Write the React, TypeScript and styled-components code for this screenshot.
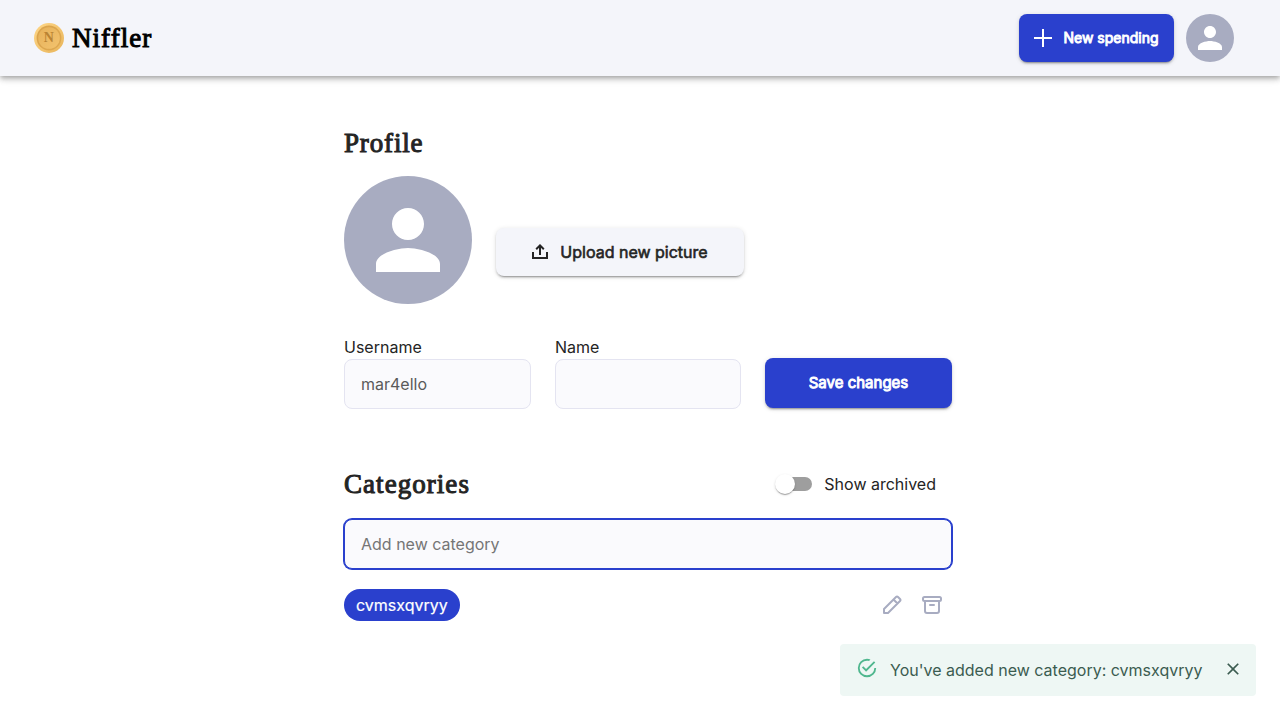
import React from "react";
import styled, { createGlobalStyle } from "styled-components";

const GlobalStyle = createGlobalStyle`
  *, *::before, *::after { box-sizing: border-box; }
  body { margin: 0; background: #fff; color: #242424; font: 400 16px/24px Inter, sans-serif; height: 720px; overflow: hidden; }
  button, input { font: inherit; margin: 0; }
  button { cursor: pointer; }
`;

const Header = styled.header`
  height: 76px;
  padding: 0 46px 0 34px;
  display: flex;
  align-items: center;
  background: #f4f5fa;
  box-shadow: 0 2px 4px -1px rgba(0, 0, 0, 0.2), 0 4px 5px rgba(0, 0, 0, 0.14), 0 1px 10px rgba(0, 0, 0, 0.12);
`;
const Brand = styled.a`
  display: flex;
  align-items: center;
  gap: 8px;
  margin-right: auto;
  color: #000;
`;
const Title = styled.h2<{ $spacing: string }>`
  margin: 0;
  font: 400 27px/32px "Liberation Serif", serif;
  -webkit-text-stroke: 1px currentColor;
  letter-spacing: ${(p) => p.$spacing};
  white-space: nowrap;
`;
const Button = styled.button<{ $tone?: "light"; $width: number; $height?: number; $size?: number; $gap?: number }>`
  width: ${(p) => p.$width}px;
  height: ${(p) => p.$height ?? 48}px;
  padding: 0;
  display: flex;
  align-items: center;
  justify-content: center;
  gap: ${(p) => p.$gap ?? 8}px;
  border: 0;
  border-radius: 8px;
  color: ${(p) => (p.$tone ? "#242424" : "#fff")};
  background: ${(p) => (p.$tone ? "#f4f5fa" : "#2a40cd")};
  font-size: ${(p) => p.$size ?? 16}px;
  font-weight: 400;
  -webkit-text-stroke: ${(p) => (p.$tone ? 0.6 : 0.9)}px currentColor;
  white-space: nowrap;
  box-shadow: 0 3px 1px -2px rgba(0, 0, 0, 0.2), 0 2px 2px rgba(0, 0, 0, 0.14), 0 1px 5px rgba(0, 0, 0, 0.12);
`;
const Avatar = styled.div<{ $size: number }>`
  width: ${(p) => p.$size}px;
  height: ${(p) => p.$size}px;
  display: grid;
  place-items: center;
  flex: none;
  border-radius: 50%;
  background: #a8acc1;
  color: #fff;
  svg { width: 75%; height: 75%; fill: currentColor; }
`;
const HeaderActions = styled.div`
  display: flex;
  gap: 12px;
`;
const Main = styled.main`
  width: 608px;
  margin: 0 0 0 344px;
  padding-top: 51px;
`;
const PictureRow = styled.div`
  display: flex;
  align-items: center;
  gap: 24px;
  margin-top: 17px;
  ${Button} { margin-top: 24px; }
`;
const Form = styled.form`
  display: grid;
  grid-template-columns: 187px 186px 187px;
  column-gap: 24px;
  align-items: end;
  margin-top: 31px;
  ${Button} { margin-bottom: 1px; }
`;
const Field = styled.label`
  display: flex;
  flex-direction: column;
`;
const Input = styled.input<{ $active?: boolean }>`
  width: 100%;
  height: 50px;
  padding: 0 16px;
  border: 1px solid ${(p) => (p.$active ? "#2a40cd" : "#e4e4f1")};
  border-radius: 8px;
  outline: 0;
  box-shadow: ${(p) => (p.$active ? "0 0 0 1px #2a40cd" : "none")};
  background: #fafafd;
  color: #5a5a5a;
  &::placeholder { color: #757575; opacity: 1; }
`;
const CategoriesHead = styled.div`
  display: flex;
  justify-content: space-between;
  align-items: center;
  margin: 59px 16px 19px 0;
`;
const ToggleLabel = styled.label`
  display: flex;
  align-items: center;
  gap: 12px;
`;
const Track = styled.span`
  width: 34px;
  height: 14px;
  border-radius: 7px;
  display: flex;
  align-items: center;
  background: #9e9e9e;
`;
const Thumb = styled.span`
  width: 20px;
  height: 20px;
  margin-left: -3px;
  border-radius: 50%;
  flex: none;
  background: #fff;
  box-shadow: 0 2px 1px -1px rgba(0, 0, 0, 0.2), 0 1px 1px rgba(0, 0, 0, 0.14), 0 1px 3px rgba(0, 0, 0, 0.12);
`;
const CategoryRow = styled.div`
  display: flex;
  align-items: center;
  justify-content: space-between;
  margin-top: 20px;
  padding-right: 8px;
`;
const Chip = styled.span`
  height: 32px;
  padding: 0 12px;
  border-radius: 16px;
  background: #2a40cd;
  color: #fff;
  -webkit-text-stroke: 0.2px currentColor;
  line-height: 32px;
`;
const RowIcons = styled.div`
  display: flex;
  gap: 16px;
  color: #a8acc1;
`;
const Toast = styled.div`
  position: fixed;
  right: 24px;
  bottom: 24px;
  width: 416px;
  height: 52px;
  padding: 0 13px 0 16px;
  display: flex;
  align-items: center;
  border-radius: 4px;
  background: #eef7f4;
  color: #3b5c50;
`;
const ToastIcon = styled.svg`
  width: 22px;
  height: 22px;
  margin: 0 12px 4px 0;
  fill: #4fb78e;
`;
const CloseIcon = styled.svg`
  width: 20px;
  height: 20px;
  margin: 0 0 2px auto;
  fill: currentColor;
`;

const Person = () => (
  <svg viewBox="0 0 24 24">
    <path d="M12 12c2.21 0 4-1.79 4-4s-1.79-4-4-4-4 1.79-4 4 1.79 4 4 4zm0 2c-2.67 0-8 1.34-8 4v2h16v-2c0-2.66-5.33-4-8-4z" />
  </svg>
);

const Coin = () => (
  <svg width="30" height="30" viewBox="0 0 30 30">
    <defs>
      <linearGradient id="rim" x1="0" y1="0" x2="1" y2="1">
        <stop offset="0" stopColor="#ffd788" />
        <stop offset="1" stopColor="#e8b45a" />
      </linearGradient>
      <linearGradient id="face" x1="0" y1="0" x2="1" y2="1">
        <stop offset="0" stopColor="#d9a24b" />
        <stop offset="1" stopColor="#dfa951" />
      </linearGradient>
      <linearGradient id="center" x1="0" y1="0" x2="1" y2="1">
        <stop offset="0" stopColor="#e6b15a" />
        <stop offset="1" stopColor="#f3c36e" />
      </linearGradient>
    </defs>
    <circle cx="15" cy="15" r="15" fill="url(#rim)" />
    <circle cx="15" cy="15" r="12.4" fill="url(#face)" />
    <circle cx="15" cy="15" r="10.8" fill="url(#center)" />
    <text x="14.8" y="19.4" textAnchor="middle" fontFamily="Liberation Serif, serif" fontWeight="700" fontSize="14" fill="#b98333">N</text>
  </svg>
);

export default function App() {
  return (
    <>
      <GlobalStyle />
      <Header>
        <Brand>
          <Coin />
          <Title as="h1" $spacing="1.05px">Niffler</Title>
        </Brand>
        <HeaderActions>
          <Button $width={155} $size={14} $gap={11}>
            <svg width="18" height="18" viewBox="0 0 18 18" stroke="currentColor" strokeWidth="2">
              <path d="M9 0v18M0 9h18" />
            </svg>
            New spending
          </Button>
          <Avatar $size={48}><Person /></Avatar>
        </HeaderActions>
      </Header>
      <Main>
        <Title $spacing="0.85px">Profile</Title>
        <PictureRow>
          <Avatar $size={128}><Person /></Avatar>
          <Button $tone="light" $width={248} $gap={12}>
            <svg width="16" height="16" viewBox="0 0 16 16" fill="none" stroke="currentColor" strokeWidth="2">
              <path d="M1 8v6h14V8M8 11V2M4.2 5.2 8 1.4l3.8 3.8" />
            </svg>
            Upload new picture
          </Button>
        </PictureRow>
        <Form onSubmit={(e) => e.preventDefault()}>
          <Field>Username<Input defaultValue="mar4ello" /></Field>
          <Field>Name<Input /></Field>
          <Button $width={187} $height={50} $size={15}>Save changes</Button>
        </Form>
        <CategoriesHead>
          <Title $spacing="1.05px">Categories</Title>
          <ToggleLabel><Track><Thumb /></Track>Show archived</ToggleLabel>
        </CategoriesHead>
        <Input $active placeholder="Add new category" />
        <CategoryRow>
          <Chip>cvmsxqvryy</Chip>
          <RowIcons>
            <svg width="24" height="24" viewBox="0 0 24 24" fill="none" stroke="currentColor" strokeWidth="2" strokeLinejoin="round">
              <path d="M4 20v-4L16 4q1-1 2 0l2 2q1 1 0 2L8 20zM13.5 6.5l4 4" />
            </svg>
            <svg width="24" height="24" viewBox="0 0 24 24" fill="none" stroke="currentColor" strokeWidth="2" strokeLinecap="round">
              <rect x="3" y="4" width="18" height="4" rx="1.5" />
              <path d="M5 8v10a2 2 0 0 0 2 2h10a2 2 0 0 0 2-2V8M10 12h4" />
            </svg>
          </RowIcons>
        </CategoryRow>
      </Main>
      <Toast>
        <ToastIcon viewBox="0 0 24 24">
          <path d="M20,12A8,8 0 0,1 12,20A8,8 0 0,1 4,12A8,8 0 0,1 12,4C12.76,4 13.5,4.11 14.2,4.31L15.77,2.74C14.61,2.26 13.34,2 12,2A10,10 0 0,0 2,12A10,10 0 0,0 12,22A10,10 0 0,0 22,12M7.91,10.08L6.5,11.5L11,16L21,6L19.59,4.58L11,13.17L7.91,10.08Z" />
        </ToastIcon>
        You've added new category: cvmsxqvryy
        <CloseIcon viewBox="0 0 24 24">
          <path d="M19 6.41L17.59 5 12 10.59 6.41 5 5 6.41 10.59 12 5 17.59 6.41 19 12 13.41 17.59 19 19 17.59 13.41 12z" />
        </CloseIcon>
      </Toast>
    </>
  );
}
